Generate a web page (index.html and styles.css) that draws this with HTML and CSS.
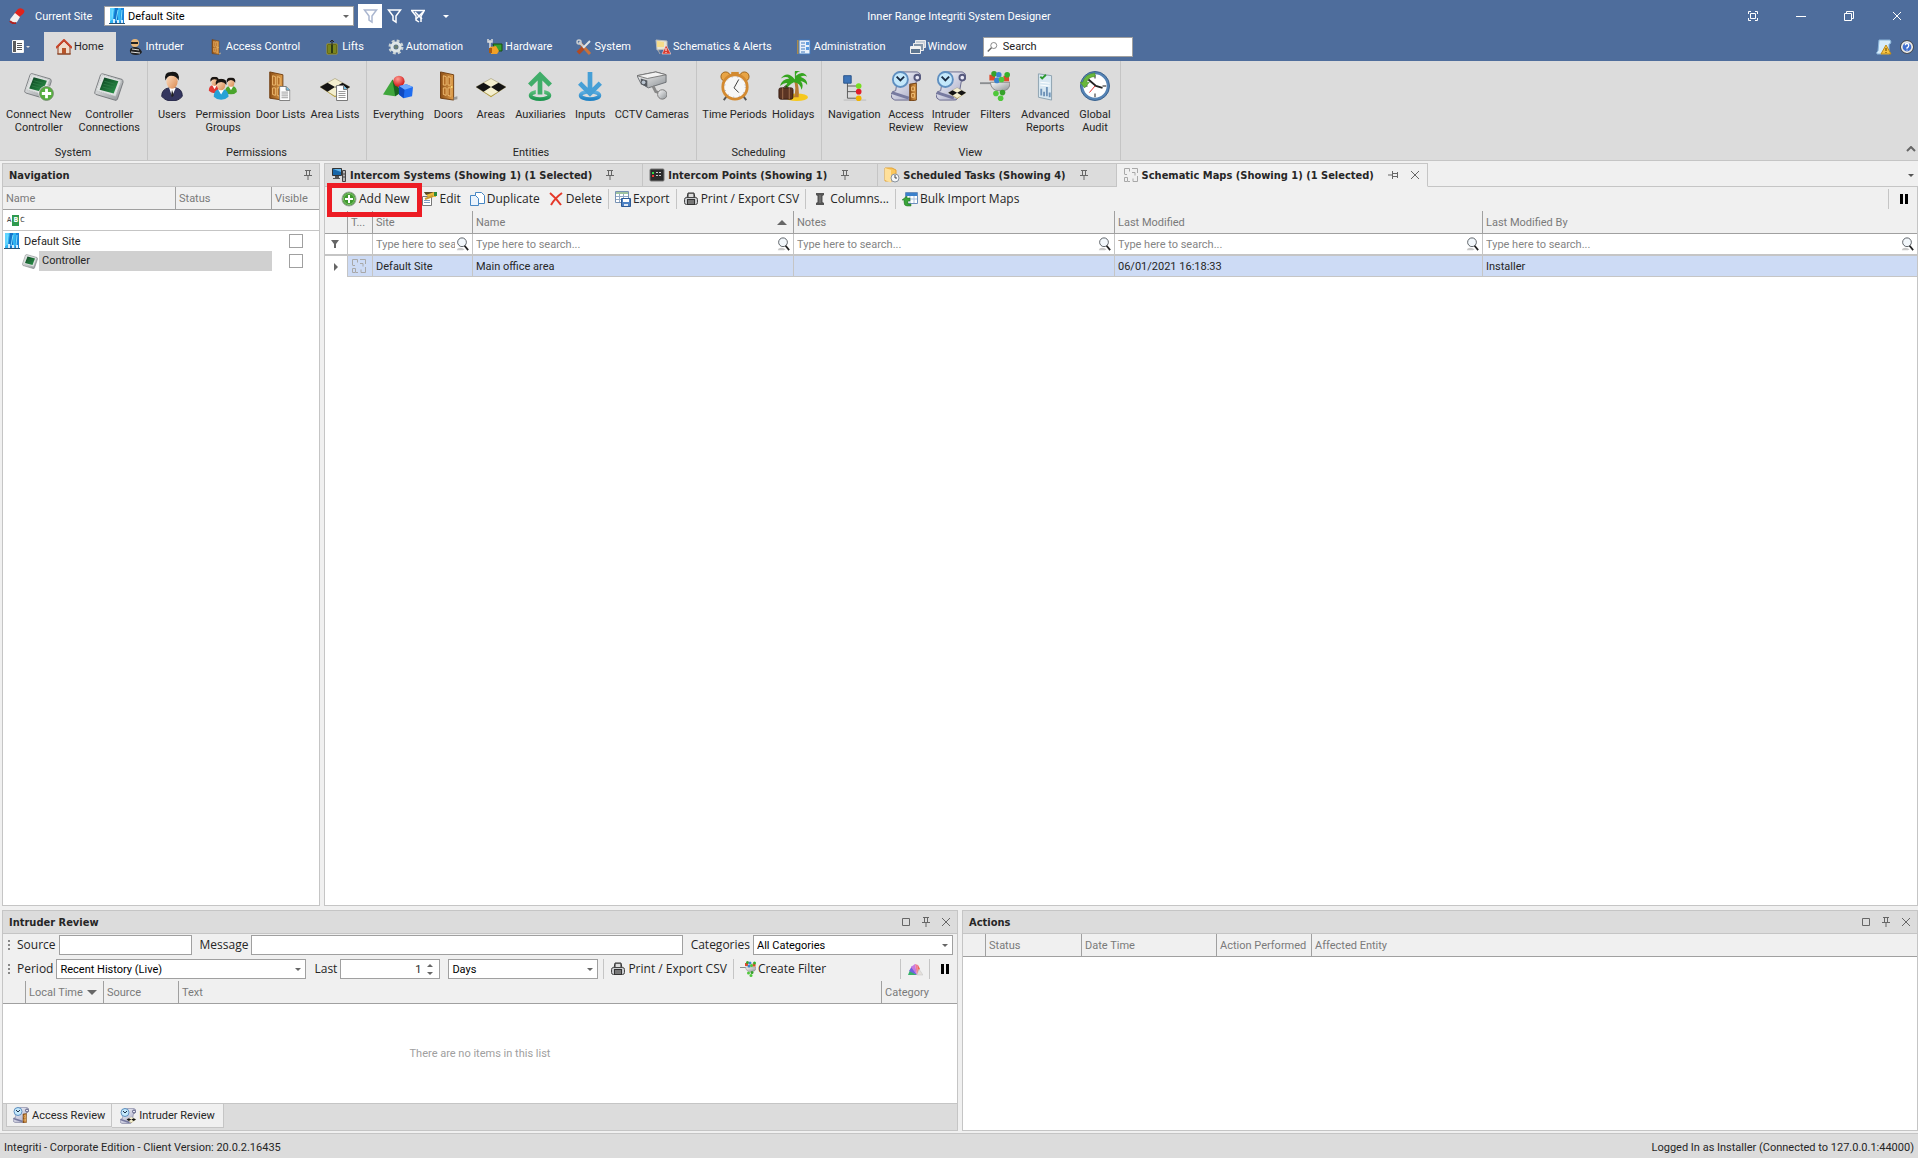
FILE: index.html
```html
<!DOCTYPE html>
<html lang="en">
<head>
<meta charset="utf-8">
<title>Inner Range Integriti System Designer</title>
<link rel="stylesheet" href="styles.css">
</head>
<body>
<svg class="sprite" aria-hidden="true">
  <defs>
    <linearGradient id="gSteel" x1="0" y1="0" x2="1" y2="1"><stop offset="0" stop-color="#fbfbfb"/><stop offset="1" stop-color="#8d9296"/></linearGradient>
    <linearGradient id="gChip" x1="0" y1="0" x2="1" y2="1"><stop offset="0" stop-color="#0b3d1e"/><stop offset="1" stop-color="#2c9a4c"/></linearGradient>
    <linearGradient id="gWood" x1="0" y1="0" x2="1" y2="0"><stop offset="0" stop-color="#8d4f16"/><stop offset="1" stop-color="#e2a04c"/></linearGradient>
    <linearGradient id="gSkin" x1="0" y1="0" x2="1" y2="1"><stop offset="0" stop-color="#ffe3c8"/><stop offset="1" stop-color="#d9884e"/></linearGradient>
    <linearGradient id="gGreen" x1="0" y1="0" x2="0" y2="1"><stop offset="0" stop-color="#56bd78"/><stop offset="1" stop-color="#1f9650"/></linearGradient>
    <linearGradient id="gBlue" x1="0" y1="0" x2="0" y2="1"><stop offset="0" stop-color="#5fb0e2"/><stop offset="1" stop-color="#2283c4"/></linearGradient>
    <linearGradient id="gScroll" x1="0" y1="0" x2="1" y2="1"><stop offset="0" stop-color="#ffffff"/><stop offset="1" stop-color="#9d9fc0"/></linearGradient>
    <radialGradient id="gRed" cx=".4" cy=".3" r=".7"><stop offset="0" stop-color="#ff9c92"/><stop offset="1" stop-color="#cf1414"/></radialGradient>
  </defs>

  <symbol id="page" viewBox="0 0 12 16"><path d="M.5.5h7l4 4v11H.5z" fill="#fff" stroke="#777"/><path d="M7.500.5v4h4" fill="#6ec6ee" stroke="#777"/><path d="M2.500 6.500h7M2.500 8.500h7M2.500 10.500h7M2.500 12.500h7" stroke="#999"/></symbol>

  <symbol id="controller" viewBox="0 0 32 32"><path d="M9 3 30 9 Q31 10 31 12L25 30 Q24 32 22 31L2 25 Q0 24 1 22L7 4Q8 3 9 3z" fill="url(#gSteel)" stroke="#74787b"/><path d="M9 4 29 10 23 27 2 21z" fill="#dfe2e2" stroke="#b9bcbc" stroke-dasharray="1 1"/><path d="M11 7 26 11 21 24 6 20z" fill="url(#gChip)"/><path d="M11 11l11 3M10 14l11 3M9 17l11 3" stroke="#2d7a45"/></symbol>
  <symbol id="controller-add" viewBox="0 0 32 32"><use href="#controller" width="30" height="30"/><circle cx="24" cy="24" r="8" fill="#55ae3d" stroke="#fff" stroke-width="1"/><circle cx="24" cy="24" r="7.500" fill="none" stroke="#7e8c7c"/><path d="M24 19v10M19 24h10" stroke="#fff" stroke-width="3"/></symbol>
  <symbol id="user" viewBox="0 0 32 32"><path d="M5 27q0-8 8-9h7q7 1 7 9-4 5-11 5T5 27z" fill="#34365f" stroke="#1f2040"/><path d="M13 18l3 9 4-9z" fill="#fff"/><path d="M16 20l-1 6 1 2 2-2z" fill="#222"/><ellipse cx="16" cy="11" rx="6" ry="8" fill="url(#gSkin)"/><path d="M9 10Q7 1 15 1q10-1 8 9-2-5-8-5-4 0-6 5z" fill="#151515"/></symbol>
  <symbol id="mini-user" viewBox="0 0 16 20"><path d="M1 17q0-6 5-7h4q5 1 5 7-3 3-7 3t-7-3z" fill="currentColor"/><path d="M5 10l3 5 3-5z" fill="#fff"/><ellipse cx="8" cy="6" rx="4" ry="5" fill="url(#gSkin)"/><path d="M3 6Q2 0 8 0q6 0 5 6-2-3-5-3T3 6z" fill="#1a1512"/></symbol>
  <symbol id="groups" viewBox="0 0 32 32"><use href="#mini-user" x="0" y="6" width="14" height="18" color="#e23b35"/><use href="#mini-user" x="17" y="7" width="15" height="18" color="#4aa52c"/><use href="#mini-user" x="5" y="8" width="18" height="23" color="#27a2d6"/></symbol>
  <symbol id="door" viewBox="0 0 32 32"><path d="M8 1 22 4v27L8 29z" fill="url(#gWood)" stroke="#6f3c0e"/><path d="M11 5l3 1v9h-3zM16 6l3 1v8h-3zM11 18h3v8l-3-1zM16 18h3v9l-3-1z" fill="#b26c26" stroke="#f0bd72"/><circle cx="20" cy="17" r="1" fill="#ffe07a"/><path d="M22 28l4-1v3l-4 1z" fill="#999"/></symbol>
  <symbol id="doorlist" viewBox="0 0 32 32"><use href="#door" x="-4" width="32" height="32"/><use href="#page" x="14" y="16" width="12" height="16"/></symbol>
  <symbol id="area" viewBox="0 0 32 32"><path d="M0 17l16 9 16-9-16 11z" fill="#c8a928"/><path d="M0 17 16 8l16 9-16 10z" fill="#f4efcf" stroke="#8b8050" stroke-width=".5"/><path d="M0 17l8-4.500 8 4.500-8 5zM16 17l8-4.500 8 4.500-8 5z" fill="#141414"/></symbol>
  <symbol id="arealist" viewBox="0 0 32 32"><use href="#area" width="32" height="32"/><use href="#page" x="17" y="15" width="13" height="17"/></symbol>
  <symbol id="shapes" viewBox="0 0 32 32"><path d="M0 25 10 9l10 13-7 5z" fill="#3fa63b"/><path d="M10 9l10 13-7 5z" fill="#17641f"/><circle cx="17" cy="11" r="6" fill="url(#gRed)"/><path d="M17 16l8-2 7 3-1 10-9 2-5-4z" fill="#1f6df0"/><path d="M17 16l6 4 9-3-7-3z" fill="#6da8ff"/><path d="M23 20l-1 9-5-4v-9z" fill="#114ac0"/></symbol>
  <symbol id="aux" viewBox="0 0 32 32"><ellipse cx="16" cy="26" rx="10" ry="4" fill="none" stroke="url(#gGreen)" stroke-width="4"/><path d="M16 26V5" stroke="#dcdcdc" stroke-width="9"/><path d="M16 25V4M5 15 16 4l11 11" fill="none" stroke="#40ad69" stroke-width="5"/></symbol>
  <symbol id="input" viewBox="0 0 32 32"><ellipse cx="16" cy="26" rx="10" ry="4" fill="none" stroke="url(#gBlue)" stroke-width="4"/><path d="M16 0v22" stroke="#dcdcdc" stroke-width="9"/><path d="M16 1v21M5 13l11 11 11-11" fill="none" stroke="#469fd6" stroke-width="5"/></symbol>
  <symbol id="cctv" viewBox="0 0 32 32"><path d="M0 5 20 1l11 3v8L12 18 4 13z" fill="url(#gSteel)" stroke="#6a6e72"/><path d="M0 5l11 3L31 4 20 1z" fill="#f2f2f2" stroke="#777"/><path d="M4 8l7 2v7l-7-3z" fill="#555a60"/><circle cx="7" cy="12" r="2" fill="#b9c4d0"/><path d="M17 16l3 6 6 2" stroke="#888" stroke-width="3" fill="none"/><circle cx="27" cy="25" r="5" fill="url(#gSteel)" stroke="#777"/></symbol>
  <symbol id="alarm" viewBox="0 0 32 32"><circle cx="6" cy="6" r="5" fill="#e8a445" stroke="#9d6217"/><circle cx="26" cy="6" r="5" fill="#e8a445" stroke="#9d6217"/><path d="M12 1h8v4h-8z" fill="#d08a30"/><path d="M7 27l-3 4M25 27l3 4" stroke="#555" stroke-width="2"/><circle cx="16" cy="17" r="13" fill="#f7f7f7" stroke="#d38a31" stroke-width="3"/><circle cx="16" cy="17" r="11" fill="none" stroke="#99a" stroke-width="1" stroke-dasharray="1 5"/><path d="M20 9l-5 9 5 5" fill="none" stroke="#333"/></symbol>
  <symbol id="palm" viewBox="0 0 32 32"><ellipse cx="20" cy="28" rx="12" ry="4" fill="#f6c81e"/><path d="M17 10q3 8 0 18h5q1-10-2-18z" fill="#b77a32"/><path d="M18 9Q10-1 3 8q6-3 9 0-8 1-10 8 5-4 8-3-4 4-2 8 3-6 9-9 7 1 8 8 3-6-1-9 4 0 7 4 1-6-7-9 4-2 7 0-4-7-12-1 0-4 5-5-7-3-6 3z" fill="#35a51f"/><rect x="1" y="18" width="15" height="12" rx="2" fill="#5b3423" stroke="#331b10"/><path d="M5 18v12M12 18v12" stroke="#a07050"/><path d="M6 18q2-4 5 0" fill="none" stroke="#331b10"/></symbol>
  <symbol id="tree" viewBox="0 0 32 32"><path d="M5 31h24" stroke="#bbb"/><path d="M9 8v21h10M9 16h10M9 22h10" fill="none" stroke="#555"/><path d="M5 5h8v8H5z" fill="#3d74b8" stroke="#27528a"/><circle cx="21" cy="16" r="3" fill="#77dd22"/><circle cx="21" cy="22" r="3" fill="#e11d2b"/><circle cx="21" cy="29" r="3" fill="#f0b400"/></symbol>
  <symbol id="scrollclock" viewBox="0 0 32 32"><path d="M8 1h20q4 1 4 6-1 4-5 4l-3 17q-2 4-6 3H4q-4-1-4-6 1-4 5-4z" fill="url(#gScroll)" stroke="#66688c"/><circle cx="28" cy="7" r="3" fill="#e8e8f6" stroke="#55587c" stroke-width="2"/><path d="M1 23l18 6" stroke="#777aa0" stroke-width="3"/><circle cx="10" cy="9" r="8" fill="#c4e8fb" stroke="#5f8fc0" stroke-width="2"/><path d="M6 6l4 4 4-4" fill="none" stroke="#1b2c44" stroke-width="2"/></symbol>
  <symbol id="accessreview" viewBox="0 0 32 32"><use href="#scrollclock" width="32" height="32"/><path d="M20 14l7-1v18l-7 1z" fill="url(#gWood)" stroke="#6f3c0e"/><path d="M22 17h3v4h-3zM22 24h3v4h-3z" fill="none" stroke="#f2c07a"/></symbol>
  <symbol id="intruderreview" viewBox="0 0 32 32"><use href="#scrollclock" width="32" height="32"/><use href="#area" x="13" y="13" width="19" height="19"/></symbol>
  <symbol id="sieve" viewBox="0 0 32 32"><path d="M0 12h14v2H0z" fill="#8a8d90"/><path d="M11 12h21q0 9-8 9h-4q-8 0-9-9z" fill="url(#gSteel)" stroke="#888"/><path d="M10 4h6v6h-6zM25 5h6v6h-6z" fill="#e04a2a"/><circle cx="15" cy="3" r="3" fill="#36a12a"/><circle cx="29" cy="4" r="3" fill="#36b12a"/><circle cx="20" cy="4" r="3" fill="#3a84cf"/><circle cx="18" cy="10" r="3" fill="#3a84cf"/><circle cx="23" cy="9" r="3" fill="#4fc83a"/><circle cx="17" cy="24" r="3" fill="#4fc83a"/><circle cx="24" cy="23" r="3" fill="#36a12a"/><circle cx="22" cy="29" r="3" fill="#4fc83a"/></symbol>
  <symbol id="report" viewBox="0 0 32 32"><path d="M9 3l14 2v26L9 28z" fill="#d8e8f2" stroke="#8ba0ae"/><path d="M11 6l2 2 4-4" fill="none" stroke="#2d9a2d" stroke-width="2"/><path d="M11 12l10 1M11 15l10 1" stroke="#fff"/><path d="M12 26v-7M15 27v-5M18 27V17M21 28v-5" stroke="#6f93b8" stroke-width="2"/></symbol>
  <symbol id="audit" viewBox="0 0 32 32"><circle cx="16" cy="16" r="14" fill="#fff" stroke="#5583b4" stroke-width="3"/><circle cx="16" cy="16" r="15.500" fill="none" stroke="#385f8c"/><path d="M16 4v4M16 24v4M4 16h4M24 16h4" stroke="#888" stroke-width="2"/><path d="M16 2Q5 3 3 12H0l5 6 5-6H7q2-6 9-6z" fill="#69b83c" stroke="#3d8420" stroke-width=".5"/><path d="M9 9l8 7 7 2" fill="none" stroke="#222" stroke-width="2"/><path d="M16 16l-6 7" stroke="#d22"/></symbol>

  <symbol id="applogo" viewBox="0 0 16 16"><path d="M9 1q3-2 6 1 1 2-1 4L9 10 5 6z" fill="#e0231b"/><path d="M6 5l5 4-3 5q-3 2-6 1-2-3 0-5z" fill="#f3f0ee"/><path d="M1 13q2 3 6 2" stroke="#a22" fill="none" stroke-width="2"/></symbol>
  <symbol id="site" viewBox="0 0 16 16"><path d="M1 0h14v15H1z" fill="#2fb4f2"/><path d="M1 0h4L2 13H1z" fill="#5fd4ff"/><path d="M6 0h3v15H4z" fill="#1576cc"/><path d="M12 0h3v15h-4z" fill="#1a85da"/><path d="M9 2L7 13M13 2l-1 11M4 2L3 12" stroke="#7fe0ff"/><path d="M4 11h2v4H4zM8 12h2v3H8zM12 12h2v3h-2z" fill="#d6efff"/><path d="M0 15h16v1H0z" fill="#2a5273"/></symbol>
  <symbol id="funnel" viewBox="0 0 16 16"><path d="M2.500 2h12L10 8v6l-3-2V8z" fill="none" stroke="currentColor" stroke-width="1.500"/></symbol>
  <symbol id="funnel-x" viewBox="0 0 16 16"><path d="M1 2.500h14M2 3l4 5v4l3 2M14 3l-3 5v6" fill="none" stroke="currentColor" stroke-width="1.500"/><path d="M5 4l7 7M13 4l-7 7" stroke="currentColor" stroke-width="1.500"/></symbol>
  <symbol id="menu" viewBox="0 0 20 16"><path d="M1.500 1.500h11v12h-11z" fill="#5c5c5c" stroke="#f5f5f5"/><path d="M5 2h7v11H5z" fill="#fff"/><path d="M6 4.500h5M6 6.500h5M6 8.500h5M6 10.500h5" stroke="#555"/><path d="M15 7h4l-2 2z" fill="#ddd"/></symbol>
  <symbol id="home" viewBox="0 0 16 16"><path d="M2 8v7h12V8L8 2z" fill="#f0dccb" stroke="#8d3a1c"/><path d="M0 9l8-8 8 8" fill="none" stroke="#c8452a" stroke-width="2"/><path d="M6 9h4v6H6z" fill="#b8552a"/><path d="M1 15h14" stroke="#8a4a2a"/></symbol>
  <symbol id="burglar" viewBox="0 0 16 16"><ellipse cx="7" cy="4" rx="4" ry="4" fill="#e8b77a"/><path d="M3 3h7v2H3z" fill="#222"/><path d="M2 13q-1-4 4-5 6 0 8 5-1 3-6 3-5 0-6-3z" fill="#222"/><path d="M4 10l7 1M3 13l9 1" stroke="#ddd"/></symbol>
  <symbol id="lift" viewBox="0 0 16 16"><path d="M3 5h10v10H3z" fill="#2c3a12" stroke="#a59a1f"/><path d="M4 6h3v8H4zM9 6h3v8H9z" fill="#7b861c"/><path d="M8 1v5M6 3l2-2 2 2" stroke="#222" fill="none"/></symbol>
  <symbol id="gear" viewBox="0 0 16 16"><circle cx="8" cy="8" r="6" fill="none" stroke="#c9d2d4" stroke-width="3" stroke-dasharray="2.700 2"/><circle cx="8" cy="8" r="4" fill="none" stroke="#dfe6e6" stroke-width="3"/><circle cx="8" cy="8" r="2" fill="#6b7f6e"/></symbol>
  <symbol id="hardware" viewBox="0 0 16 16"><path d="M3 1v8M1 0v3h4V0" stroke="#ddd" stroke-width="1.500" fill="none"/><path d="M6 5h9v7H8z" fill="#37a12c" stroke="#184f14"/><path d="M3 8l6-1 3 5-2 3H4z" fill="#f2a127"/><path d="M2 9h3v5H2z" fill="#a85b14"/></symbol>
  <symbol id="tools" viewBox="0 0 16 16"><path d="M4 4l10 11" stroke="#c9723c" stroke-width="3"/><path d="M3 3l5 5" stroke="#c9ced2" stroke-width="2"/><circle cx="3" cy="3" r="2" fill="none" stroke="#c9ced2" stroke-width="1.500"/><path d="M14 2L7 9" stroke="#dfe3e6" stroke-width="2"/><path d="M7 9l-5 5" stroke="#b04a24" stroke-width="4"/></symbol>
  <symbol id="schematic" viewBox="0 0 16 16"><path d="M1 1l11 1v8L2 11z" fill="#e9e6d2" stroke="#bbb"/><path d="M2 2l7 1v5H2z" fill="#f6dc8a"/><path d="M3 11l2 4" stroke="#aaa"/><path d="M11 6l5 9H7z" fill="#d8392d" stroke="#fff" stroke-width=".5"/><path d="M11 9v3M11 13v1" stroke="#fff"/></symbol>
  <symbol id="adminbook" viewBox="0 0 16 16"><path d="M1 1h3v14H1z" fill="#a98a4a"/><path d="M3 1h11v14H3z" fill="#e8f1fb" stroke="#3f78bd"/><path d="M5 4h4M5 7h4M5 10h4M5 13h4" stroke="#3f78bd"/><path d="M10 3h3v3h-3zM10 8h3v3h-3z" fill="#5a9be0"/></symbol>
  <symbol id="windows" viewBox="0 0 16 16"><path d="M5.500 1.500h10v7h-10z" fill="#c3ccd6" stroke="#eee"/><path d="M3.500 4.500h10v7h-10z" fill="#8597aa" stroke="#eee"/><path d="M.5 7.500h10v7H.5z" fill="#5e7690" stroke="#f2f2f2"/><path d="M1 9h9" stroke="#f2f2f2" stroke-width="2"/></symbol>
  <symbol id="find" viewBox="0 0 16 16"><circle cx="9" cy="6" r="4" fill="none" stroke="#666"/><path d="M6 9l-5 5" stroke="#666" stroke-width="2"/></symbol>
  <symbol id="lens" viewBox="0 0 16 16"><path d="M3 13q4-2 8 1l-2 1H2z" fill="#c7c7c7"/><circle cx="8" cy="6" r="5" fill="#f2f7fb" stroke="#4b5157"/><path d="M11 10l4 5" stroke="#222" stroke-width="2"/></symbol>
  <symbol id="scrollwarn" viewBox="0 0 16 16"><path d="M3 1h11q2 2 0 4h-1v10H1q-1-2 1-3z" fill="#d6ecfb" stroke="#8ab4d8"/><path d="M10 6l5 9H5z" fill="#f6c343" stroke="#c08a15"/><path d="M10 9v3M10 13v1" stroke="#5a3c00"/></symbol>
  <symbol id="help" viewBox="0 0 16 16"><circle cx="8" cy="8" r="6" fill="#3f6fcf" stroke="#ece9e2" stroke-width="2"/><circle cx="8" cy="8" r="7.500" fill="none" stroke="#4a4a4a"/><path d="M6 6q0-2 2-2t2 2-2 3v1M8 11v1" stroke="#fff" stroke-width="1.500" fill="none"/></symbol>
  <symbol id="pin" viewBox="0 0 10 12"><path d="M2 1.500h6M3.500 1v5M6.500 1v5M1 6.500h8M5 7v4" stroke="currentColor" fill="none"/><path d="M6 2h1v4H6z" fill="currentColor"/></symbol>
  <symbol id="pin-side" viewBox="0 0 12 10"><path d="M10.500 2v6M11 3.500H6M11 6.500H6M5.500 1v8M5 5H1" stroke="currentColor" fill="none"/><path d="M6 6h5v1H6z" fill="currentColor"/></symbol>
  <symbol id="close" viewBox="0 0 10 10"><path d="M1 1l8 8M9 1L1 9" stroke="currentColor"/></symbol>
  <symbol id="maximize" viewBox="0 0 10 10"><path d="M1.500 1.500h7v7h-7z" fill="none" stroke="currentColor"/></symbol>
  <symbol id="minimize" viewBox="0 0 10 10"><path d="M0 5.500h10" stroke="currentColor"/></symbol>
  <symbol id="restore" viewBox="0 0 10 10"><path d="M.5 2.500h7v7h-7zM2.500 2V.5h7v7H8" fill="none" stroke="currentColor"/></symbol>
  <symbol id="fullscreen" viewBox="0 0 10 10"><path d="M.5 3V.5H3M7 .5h2.500V3M9.500 7v2.500H7M3 9.500H.5V7M2.500 2.500h5v5h-5z" fill="none" stroke="currentColor"/></symbol>
  <symbol id="chevron-up" viewBox="0 0 10 6"><path d="M1 5l4-4 4 4" fill="none" stroke="#666" stroke-width="2"/></symbol>
  <symbol id="intercom" viewBox="0 0 16 16"><path d="M1.500 1.500h9v7h-9z" fill="#1766a8" stroke="#333"/><path d="M2 2h8v3z" fill="#63b4e8"/><path d="M4 9h4v2h1v1H2v-1h2z" fill="#555"/><path d="M11.500 3.500h3v11h-3z" fill="#b5b5b5" stroke="#444"/><path d="M12 7h2M12 10h2" stroke="#444"/></symbol>
  <symbol id="intercompt" viewBox="0 0 16 16"><rect x="1" y="2" width="14" height="12" rx="1" fill="#2b2b2b" stroke="#777"/><path d="M3 5h2v2H3z" fill="#35d447"/><path d="M3 8h2v2H3z" fill="#e33"/><path d="M7 5.500h6M7 8.500h6" stroke="#ccc" stroke-dasharray="2 1"/></symbol>
  <symbol id="folderclock" viewBox="0 0 16 16"><path d="M1 1h7l4 2v11H1z" fill="#fbc75c" stroke="#e3a436"/><path d="M1 1l6 2v13l-6-3z" fill="#ffe09a"/><circle cx="11" cy="11" r="4" fill="#f4f6f8" stroke="#8a94a0"/><path d="M11 8v3h2" fill="none" stroke="#444"/></symbol>
  <symbol id="map" viewBox="0 0 16 16"><path d="M1.500 7V1.500h5v3M4 7.500H1.500M9 1.500h5.500V6M9 5.500h3v3M14.500 9v5.500H10v-3M1.500 10.500h3v4h-3zM7 14.500H5" fill="none" stroke="#a8a8a8"/></symbol>
  <symbol id="plus" viewBox="0 0 16 16"><circle cx="8" cy="8" r="7" fill="#3f9a2f" stroke="#9aa39a"/><circle cx="8" cy="8" r="5.500" fill="none" stroke="#84c46f"/><path d="M8 4v8M4 8h8" stroke="#fff" stroke-width="2"/></symbol>
  <symbol id="edit" viewBox="0 0 16 16"><path d="M1.500 5.500h9v9h-9z" fill="#fff" stroke="#777"/><path d="M3 9.500h6M3 11.500h6" stroke="#7d9cc0"/><path d="M3 1h12v5H7z" fill="#e8b83a"/><path d="M3 1h10l-8 3z" fill="#5a4a28"/><path d="M13 1h3v4h-3z" fill="#2e8a3a"/><path d="M4 8l8-3" stroke="#c89c34" stroke-width="2"/></symbol>
  <symbol id="duplicate" viewBox="0 0 16 16"><path d="M6.500 1.500h6l3 3v8h-9z" fill="#fff" stroke="#4787c4"/><path d="M1.500 4.500h5l3 3v7h-8z" fill="#eaf3fc" stroke="#4787c4"/></symbol>
  <symbol id="delete" viewBox="0 0 16 16"><path d="M2 2q6 5 11 12M14 2Q7 7 3 14" stroke="#e5392a" stroke-width="2" fill="none"/></symbol>
  <symbol id="export" viewBox="0 0 16 16"><path d="M.5.5h13v11H.5z" fill="#fff" stroke="#7792b4"/><path d="M1 1h12v2H1z" fill="#9fc3a0"/><path d="M1 5.500h12M1 8.500h12M4.500 3v8M8.500 3v8" stroke="#93aac6"/><path d="M6.500 7.500h9v8h-9z" fill="#4d82c4" stroke="#2d5a96"/><path d="M8 8h6v3H8z" fill="#fff"/><path d="M9 13h4v2H9z" fill="#e2eaf4"/></symbol>
  <symbol id="printer" viewBox="0 0 16 16"><path d="M5 2h6l1 5H4z" fill="#888" stroke="#333"/><path d="M6 3h4v3H6z" fill="#ddd"/><rect x="1.500" y="6.500" width="13" height="7" rx="2" fill="#c9cbce" stroke="#444"/><path d="M4 8h8v6H4z" fill="#333"/><path d="M5 10h6M5 12h6" stroke="#bbb"/></symbol>
  <symbol id="colicon" viewBox="0 0 16 16"><path d="M4 2h8v2l-1.500 1v6l1.500 1v2H4v-2l1.500-1V5L4 4z" fill="#555"/><path d="M8 4v8" stroke="#888"/></symbol>
  <symbol id="bulk" viewBox="0 0 16 16"><path d="M3.500 1.500h12v11h-12z" fill="#fff" stroke="#6b8fbd"/><path d="M4 2h11v3H4z" fill="#3a80cc"/><path d="M4 8h11M8 5v7M12 5v7" stroke="#a9bfdb"/><path d="M0 9l5-4v2h3v3H6v3h3v2H5q-3 0-3-4v-2z" fill="#3aa43a" stroke="#1c7020" stroke-width=".5"/></symbol>
  <symbol id="pause" viewBox="0 0 16 16"><path d="M4 3h3v10H4zM9 3h3v10H9z" fill="#000"/></symbol>
  <symbol id="funnel-solid" viewBox="0 0 10 10"><path d="M1 1h8L6 5v4H4V5z" fill="#666"/></symbol>
  <symbol id="palette" viewBox="0 0 16 16"><path d="M1 14 3 9l7 5z" fill="#37b26a"/><path d="M2 10 5 5l5 9z" fill="#6f62e0"/><path d="M4 6 8 3l2 11z" fill="#c77ae0"/><path d="M8 3l3 1-1 10z" fill="#f07a9a"/><path d="M11 4l2 4-3 6z" fill="#ef6a55"/><path d="M12 8l4 6h-6z" fill="#e4e0dc" stroke="#c4c4c4" stroke-width=".5"/></symbol>
</svg>

<header class="titlebar">
  <div class="quick">
    <svg class="i16"><use href="#applogo"/></svg>
    <label for="site-select" class="quick-label">Current Site</label>
    <span class="combo combo-site"><svg class="i16"><use href="#site"/></svg><select id="site-select"><option>Default Site</option></select></span>
    <button class="qbtn qbtn-on" aria-label="Filter"><svg class="i16"><use href="#funnel"/></svg></button>
    <button class="qbtn" aria-label="Edit filter"><svg class="i16"><use href="#funnel"/></svg></button>
    <button class="qbtn" aria-label="Clear filter"><svg class="i16"><use href="#funnel-x"/></svg></button>
    <button class="qbtn qbtn-drop" aria-label="Customise"></button>
  </div>
  <h1 class="apptitle">Inner Range Integriti System Designer</h1>
  <div class="winbtns">
    <button aria-label="Full screen"><svg class="i10"><use href="#fullscreen"/></svg></button>
    <button aria-label="Minimise"><svg class="i10"><use href="#minimize"/></svg></button>
    <button aria-label="Restore"><svg class="i10"><use href="#restore"/></svg></button>
    <button aria-label="Close"><svg class="i10"><use href="#close"/></svg></button>
  </div>
</header>

<nav class="menubar">
  <button class="filemenu" aria-label="Menu"><svg><use href="#menu"/></svg></button>
  <a href="#home-tab" class="mtab mtab-on"><svg class="i16"><use href="#home"/></svg>Home</a>
  <a href="#intruder-tab" class="mtab"><svg class="i16"><use href="#burglar"/></svg>Intruder</a>
  <a href="#access-tab" class="mtab"><svg class="i16"><use href="#door"/></svg>Access Control</a>
  <a href="#lifts-tab" class="mtab"><svg class="i16"><use href="#lift"/></svg>Lifts</a>
  <a href="#automation-tab" class="mtab"><svg class="i16"><use href="#gear"/></svg>Automation</a>
  <a href="#hardware-tab" class="mtab"><svg class="i16"><use href="#hardware"/></svg>Hardware</a>
  <a href="#system-tab" class="mtab"><svg class="i16"><use href="#tools"/></svg>System</a>
  <a href="#schematics-tab" class="mtab"><svg class="i16"><use href="#schematic"/></svg>Schematics &amp; Alerts</a>
  <a href="#administration-tab" class="mtab"><svg class="i16"><use href="#adminbook"/></svg>Administration</a>
  <a href="#window-tab" class="mtab"><svg class="i16"><use href="#windows"/></svg>Window</a>
  <label class="searchbox"><svg class="i12"><use href="#find"/></svg><input type="text" value="Search" aria-label="Search"></label>
  <div class="menu-right">
    <button aria-label="Warnings"><svg class="i16"><use href="#scrollwarn"/></svg></button>
    <button aria-label="Help"><svg class="i14"><use href="#help"/></svg></button>
  </div>
</nav>

<div class="ribbon">
  <section class="rgroup rg-system">
    <div class="tiles">
      <button class="tile"><svg><use href="#controller-add"/></svg>Connect New<br>Controller</button>
      <button class="tile"><svg><use href="#controller"/></svg>Controller<br>Connections</button>
    </div>
    <h2>System</h2>
  </section>
  <section class="rgroup rg-permissions">
    <div class="tiles">
      <button class="tile"><svg><use href="#user"/></svg>Users</button>
      <button class="tile"><svg><use href="#groups"/></svg>Permission<br>Groups</button>
      <button class="tile"><svg><use href="#doorlist"/></svg>Door Lists</button>
      <button class="tile"><svg><use href="#arealist"/></svg>Area Lists</button>
    </div>
    <h2>Permissions</h2>
  </section>
  <section class="rgroup rg-entities">
    <div class="tiles">
      <button class="tile"><svg><use href="#shapes"/></svg>Everything</button>
      <button class="tile"><svg><use href="#door"/></svg>Doors</button>
      <button class="tile"><svg><use href="#area"/></svg>Areas</button>
      <button class="tile"><svg><use href="#aux"/></svg>Auxiliaries</button>
      <button class="tile"><svg><use href="#input"/></svg>Inputs</button>
      <button class="tile"><svg><use href="#cctv"/></svg>CCTV Cameras</button>
    </div>
    <h2>Entities</h2>
  </section>
  <section class="rgroup rg-scheduling">
    <div class="tiles">
      <button class="tile"><svg><use href="#alarm"/></svg>Time Periods</button>
      <button class="tile"><svg><use href="#palm"/></svg>Holidays</button>
    </div>
    <h2>Scheduling</h2>
  </section>
  <section class="rgroup rg-view">
    <div class="tiles">
      <button class="tile"><svg><use href="#tree"/></svg>Navigation</button>
      <button class="tile"><svg><use href="#accessreview"/></svg>Access<br>Review</button>
      <button class="tile"><svg><use href="#intruderreview"/></svg>Intruder<br>Review</button>
      <button class="tile"><svg><use href="#sieve"/></svg>Filters</button>
      <button class="tile"><svg><use href="#report"/></svg>Advanced<br>Reports</button>
      <button class="tile"><svg><use href="#audit"/></svg>Global<br>Audit</button>
    </div>
    <h2>View</h2>
  </section>
  <button class="collapse" aria-label="Collapse ribbon"><svg><use href="#chevron-up"/></svg></button>
</div>

<main class="workspace">
  <div class="upper">
    <aside class="panel navpanel">
      <div class="ptitle"><h2>Navigation</h2><button aria-label="Pin"><svg class="pin"><use href="#pin"/></svg></button></div>
      <table class="grid navgrid">
        <colgroup><col class="c-navname"><col class="c-navstatus"><col></colgroup>
        <thead><tr><th>Name</th><th>Status</th><th>Visible</th></tr></thead>
        <tbody>
          <tr class="abcrow"><td colspan="3"><span class="abc"><span>A</span><b>B</b><span>C</span></span></td></tr>
          <tr><td colspan="2"><span class="node"><svg class="i16"><use href="#site"/></svg>Default Site</span></td><td class="check"><input type="checkbox" aria-label="Default Site visible"></td></tr>
          <tr><td colspan="2"><span class="node node-child"><svg class="i16"><use href="#controller"/></svg><span class="node-sel">Controller</span></span></td><td class="check"><input type="checkbox" aria-label="Controller visible"></td></tr>
        </tbody>
      </table>
    </aside>

    <section class="docs">
      <div class="doctabs">
        <button class="dtab"><svg class="i16"><use href="#intercom"/></svg>Intercom Systems (Showing 1) (1 Selected)<svg class="pin"><use href="#pin"/></svg></button>
        <button class="dtab"><svg class="i16"><use href="#intercompt"/></svg>Intercom Points (Showing 1)<svg class="pin"><use href="#pin"/></svg></button>
        <button class="dtab"><svg class="i16"><use href="#folderclock"/></svg>Scheduled Tasks (Showing 4)<svg class="pin"><use href="#pin"/></svg></button>
        <button class="dtab dtab-on"><svg class="i16"><use href="#map"/></svg>Schematic Maps (Showing 1) (1 Selected)<svg class="pin-side"><use href="#pin-side"/></svg><svg class="i10"><use href="#close"/></svg></button>
        <button class="tabdrop" aria-label="All tabs"></button>
      </div>
      <div class="docbody">
        <div class="toolbar">
          <button class="tb tb-add"><svg class="i16"><use href="#plus"/></svg>Add New</button>
          <button class="tb"><svg class="i16"><use href="#edit"/></svg>Edit</button>
          <button class="tb"><svg class="i16"><use href="#duplicate"/></svg>Duplicate</button>
          <button class="tb"><svg class="i16"><use href="#delete"/></svg>Delete</button>
          <span class="sep"></span>
          <button class="tb"><svg class="i16"><use href="#export"/></svg>Export</button>
          <span class="sep"></span>
          <button class="tb"><svg class="i16"><use href="#printer"/></svg>Print / Export CSV</button>
          <span class="sep"></span>
          <button class="tb"><svg class="i16"><use href="#colicon"/></svg>Columns...</button>
          <span class="sep"></span>
          <button class="tb"><svg class="i16"><use href="#bulk"/></svg>Bulk Import Maps</button>
          <span class="spacer"></span>
          <span class="sep"></span>
          <button class="tb tb-pause" aria-label="Pause"><svg class="i16"><use href="#pause"/></svg></button>
          <span class="callout"></span>
        </div>
        <table class="grid mapgrid">
          <colgroup><col class="c-ind"><col class="c-type"><col class="c-site"><col class="c-name"><col class="c-name"><col class="c-mod"><col></colgroup>
          <thead><tr><th></th><th>T...</th><th>Site</th><th><span class="sorted">Name<i class="sortup"></i></span></th><th>Notes</th><th>Last Modified</th><th>Last Modified By</th></tr></thead>
          <tbody>
            <tr class="filterrow">
              <td class="ind"><svg class="i10"><use href="#funnel-solid"/></svg></td><td></td>
              <td><label class="find"><input type="text" placeholder="Type here to search..." aria-label="Search site"><svg class="i14"><use href="#lens"/></svg></label></td>
              <td><label class="find"><input type="text" placeholder="Type here to search..." aria-label="Search name"><svg class="i14"><use href="#lens"/></svg></label></td>
              <td><label class="find"><input type="text" placeholder="Type here to search..." aria-label="Search notes"><svg class="i14"><use href="#lens"/></svg></label></td>
              <td><label class="find"><input type="text" placeholder="Type here to search..." aria-label="Search last modified"><svg class="i14"><use href="#lens"/></svg></label></td>
              <td><label class="find"><input type="text" placeholder="Type here to search..." aria-label="Search last modified by"><svg class="i14"><use href="#lens"/></svg></label></td>
            </tr>
            <tr class="selrow"><td class="ind"><i class="expander"></i></td><td class="ind"><svg class="i16"><use href="#map"/></svg></td><td>Default Site</td><td>Main office area</td><td></td><td>06/01/2021 16:18:33</td><td>Installer</td></tr>
          </tbody>
        </table>
      </div>
    </section>
  </div>

  <div class="lower">
    <section class="panel">
      <div class="ptitle"><h2>Intruder Review</h2><button aria-label="Maximise"><svg class="i10"><use href="#maximize"/></svg></button><button aria-label="Pin"><svg class="pin"><use href="#pin"/></svg></button><button aria-label="Close"><svg class="i10"><use href="#close"/></svg></button></div>
      <div class="filters">
        <div class="frow">
          <i class="grip"></i><label for="src">Source</label><input id="src" class="w-source" type="text">
          <label for="msg">Message</label><input id="msg" class="w-message" type="text">
          <label for="cat">Categories</label><span class="combo w-cat"><select id="cat"><option>All Categories</option></select></span>
        </div>
        <div class="frow">
          <i class="grip"></i><label for="per">Period</label><span class="combo w-period"><select id="per"><option>Recent History (Live)</option></select></span>
          <label for="last">Last</label><span class="spin"><input id="last" type="text" value="1"><span class="arrows"></span></span>
          <span class="combo w-days"><select aria-label="Unit"><option>Days</option></select></span>
          <div class="ftools">
            <span class="sep"></span>
            <button class="tb"><svg class="i16"><use href="#printer"/></svg>Print / Export CSV</button>
            <span class="sep"></span>
            <button class="tb"><svg class="i16"><use href="#sieve"/></svg>Create Filter</button>
            <span class="spacer"></span>
            <span class="sep"></span>
            <button class="tb" aria-label="Colours"><svg class="i16"><use href="#palette"/></svg></button>
            <span class="sep"></span>
            <button class="tb tb-pause" aria-label="Pause"><svg class="i16"><use href="#pause"/></svg></button>
          </div>
        </div>
      </div>
      <table class="grid revgrid">
        <colgroup><col class="c-rind"><col class="c-time"><col class="c-source"><col><col class="c-cat"></colgroup>
        <thead><tr><th></th><th><span class="sorted">Local Time<i class="sortdown"></i></span></th><th>Source</th><th>Text</th><th>Category</th></tr></thead>
      </table>
      <p class="empty">There are no items in this list</p>
      <div class="btabs">
        <button class="btab"><svg class="i16"><use href="#accessreview"/></svg>Access Review</button>
        <button class="btab btab-on"><svg class="i16"><use href="#intruderreview"/></svg>Intruder Review</button>
      </div>
    </section>
    <section class="panel">
      <div class="ptitle"><h2>Actions</h2><button aria-label="Maximise"><svg class="i10"><use href="#maximize"/></svg></button><button aria-label="Pin"><svg class="pin"><use href="#pin"/></svg></button><button aria-label="Close"><svg class="i10"><use href="#close"/></svg></button></div>
      <table class="grid">
        <colgroup><col class="c-rind"><col class="c-astatus"><col class="c-date"><col class="c-action"><col></colgroup>
        <thead><tr><th></th><th>Status</th><th>Date Time</th><th>Action Performed</th><th>Affected Entity</th></tr></thead>
      </table>
    </section>
  </div>
</main>

<footer class="statusbar"><span>Integriti - Corporate Edition - Client Version: 20.0.2.16435</span><span>Logged In as Installer (Connected to 127.0.0.1:44000)</span></footer>
</body>
</html>
```

FILE: styles.css
```css
:root {
  --blue: #4e6d9c;
  --bar: #dcdcdc;
  --face: #f0f0f0;
  --line: #c5c5c5;
  --edge: #a0a0a0;
  --text: #262626;
  --muted: #7a7a7a;
  --ui: Roboto, "Liberation Sans", sans-serif;
  --tool: "Open Sans", "Noto Sans", sans-serif;
  --bold: "DejaVu Sans Condensed", "DejaVu Sans", sans-serif;
}

* { box-sizing: border-box; }

body {
  margin: 0;
  min-height: 100vh;
  display: flex;
  flex-direction: column;
  background: var(--face);
  color: var(--text);
  font: 11px/13px var(--ui);
}

button, input, select {
  font: inherit;
  color: inherit;
  margin: 0;
  padding: 0;
  border: 0;
  background: none;
  border-radius: 0;
  outline: 0;
}

select { appearance: none; }
a { color: inherit; text-decoration: none; }
h1, h2, p { margin: 0; font-size: 11px; font-weight: normal; }
svg { display: block; flex: none; }

.sprite { position: absolute; width: 0; height: 0; }
.i10 { width: 10px; height: 10px; }
.i12 { width: 12px; height: 12px; }
.i14 { width: 14px; height: 14px; }
.i16 { width: 16px; height: 16px; }
.pin { width: 10px; height: 12px; }
.pin-side { width: 12px; height: 10px; }
.spacer { flex: 1; }

/* Title bar */
.titlebar {
  display: grid;
  grid-template-columns: 1fr auto 1fr;
  align-items: center;
  height: 32px;
  background: var(--blue);
  color: #fff;
}

.quick { display: flex; align-items: center; padding-left: 9px; }
.quick-label { width: 79px; padding-left: 10px; }

.combo {
  display: flex;
  align-items: center;
  position: relative;
  height: 20px;
  border: 1px solid var(--edge);
  background: #fff;
  color: #000;
}

.combo select { flex: 1; min-width: 0; padding: 0 16px 0 3px; }

.combo::after {
  content: "";
  position: absolute;
  right: 4px;
  top: 8px;
  border: 3px solid transparent;
  border-top-color: #666;
  border-bottom: 0;
}

.combo-site { width: 250px; padding-left: 4px; }

.qbtn { width: 24px; height: 24px; display: grid; place-items: center; color: #fff; }
.qbtn-on { background: #fff; color: #aab6cf; margin-left: 4px; }

.qbtn-drop::after {
  content: "";
  margin-left: 8px;
  border: 3px solid transparent;
  border-top-color: #fff;
  border-bottom: 0;
}

.winbtns { display: flex; justify-content: flex-end; gap: 6px; }
.winbtns button { width: 42px; height: 32px; display: grid; place-items: center; }

/* Ribbon tabs */
.menubar {
  display: flex;
  align-items: center;
  height: 29px;
  background: var(--blue);
  color: #fff;
}

.filemenu { width: 44px; padding-left: 11px; }
.filemenu svg { width: 20px; height: 16px; }

.mtab {
  display: flex;
  align-items: center;
  gap: 2px;
  height: 29px;
  padding: 0 12px;
  white-space: nowrap;
}

.mtab-on { background: var(--bar); color: var(--text); }

.searchbox {
  display: flex;
  align-items: center;
  gap: 4px;
  width: 150px;
  height: 20px;
  margin-left: 4px;
  padding-left: 3px;
  border: 1px solid var(--edge);
  background: #fff;
  color: #222;
}

.searchbox input { flex: 1; min-width: 0; }
.menu-right { display: flex; align-items: center; gap: 8px; margin-left: auto; padding-right: 4px; }

/* Ribbon */
.ribbon { display: flex; height: 100px; background: var(--bar); border-bottom: 1px solid var(--line); }

.rgroup {
  display: flex;
  flex-direction: column;
  justify-content: space-between;
  padding: 10px 4px 1px 3px;
  border-right: 1px solid var(--line);
}

.rgroup h2 { text-align: center; line-height: 13px; }
.rg-system { width: 148px; }
.rg-permissions { width: 219px; }
.rg-entities { width: 330px; }
.rg-scheduling { width: 125px; }
.rg-view { width: 299px; }

.tiles { display: flex; justify-content: space-between; }

.tile {
  display: flex;
  flex-direction: column;
  align-items: center;
  min-width: 42px;
  padding: 0 3px;
  white-space: nowrap;
  text-align: center;
  line-height: 13px;
}

.tile svg { width: 30px; height: 30px; margin-bottom: 7px; }
.collapse { align-self: flex-end; margin: 0 2px 8px auto; }
.collapse svg { width: 10px; height: 6px; }

/* Workspace */
.workspace { flex: 1; display: flex; flex-direction: column; gap: 4px; padding: 2px 0 2px 2px; }
.upper { flex: 1; display: flex; gap: 4px; }
.lower { display: grid; grid-template-columns: 1fr 1fr; gap: 4px; height: 221px; }

.panel { display: flex; flex-direction: column; min-width: 0; border: 1px solid var(--line); background: #fff; }
.navpanel { width: 318px; }

.ptitle {
  display: flex;
  align-items: center;
  gap: 10px;
  height: 23px;
  padding: 0 6px;
  border-bottom: 1px solid var(--line);
  background: var(--bar);
  color: #666;
}

.ptitle h2 { flex: 1; color: var(--text); font: bold 11px/13px var(--bold); }

/* Data grids */
.grid { width: 100%; table-layout: fixed; border-collapse: separate; border-spacing: 0; }

.grid th {
  height: 23px;
  padding: 0 0 0 3px;
  border-right: 1px solid var(--edge);
  border-bottom: 1px solid var(--edge);
  background: var(--face);
  color: var(--muted);
  font-weight: normal;
  text-align: left;
  white-space: nowrap;
}

.grid th:last-child, .grid td:last-child { border-right: 0; }
.grid td { height: 20px; padding: 0; overflow: hidden; white-space: nowrap; }

.c-navname { width: 173px; }
.c-navstatus { width: 96px; }
.c-ind { width: 23px; }
.c-type { width: 25px; }
.c-site { width: 100px; }
.c-name { width: 321px; }
.c-mod { width: 368px; }
.c-rind { width: 23px; }
.c-time { width: 78px; }
.c-source { width: 75px; }
.c-cat { width: 75px; }
.c-astatus { width: 96px; }
.c-date { width: 135px; }
.c-action { width: 95px; }

.grid .abcrow td { height: 21px; border-bottom: 1px solid var(--line); }
.abc { display: flex; align-items: center; padding-left: 4px; font: 7px/11px var(--bold); gap: 1px; }
.abc b { width: 7px; background: #2f9a4e; color: #fff; text-align: center; }
.node { display: flex; align-items: center; gap: 4px; height: 20px; padding-left: 1px; }
.node-child { padding-left: 19px; gap: 1px; }
.node-sel { flex: 1; background: #d0d0d0; line-height: 20px; padding-left: 3px; }
.grid .check { padding-left: 17px; }

.check input {
  appearance: none;
  display: block;
  width: 14px;
  height: 14px;
  border: 1px solid var(--edge);
  background: #fff;
}

.sorted { display: flex; align-items: center; justify-content: space-between; padding-right: 6px; }
.sortup { border: 5px solid transparent; border-bottom-color: #666; border-top: 0; }
.sortdown { border: 5px solid transparent; border-top-color: #666; border-bottom: 0; }

/* Document area */
.docs { flex: 1; min-width: 0; display: flex; flex-direction: column; }
.doctabs { display: flex; height: 24px; box-shadow: inset 0 -1px var(--line); }

.dtab {
  display: flex;
  align-items: center;
  gap: 3px;
  padding: 0 27px 0 6px;
  border: 1px solid var(--line);
  border-left-width: 0;
  background: var(--bar);
  font: bold 11px/13px var(--bold);
  white-space: nowrap;
}

.dtab:first-child { border-left-width: 1px; }
.dtab .pin, .dtab .pin-side { margin-left: 10px; color: #666; }
.dtab .i10 { margin-left: 8px; color: #666; }
.dtab-on { background: var(--face); border-bottom-color: var(--face); padding-right: 7px; }
.tabdrop { margin-left: auto; padding-right: 4px; }

.tabdrop::after {
  content: "";
  display: block;
  border: 3px solid transparent;
  border-top-color: #555;
  border-bottom: 0;
}

.docbody { flex: 1; border: 1px solid var(--line); border-top: 0; background: #fff; }

.toolbar {
  position: relative;
  display: flex;
  align-items: center;
  height: 24px;
  padding-left: 12px;
  background: var(--face);
}

.tb { display: flex; align-items: center; gap: 2px; padding: 0 4px; font: 12px/16px var(--tool); white-space: nowrap; }
.tb-add { padding-right: 8px; }
.sep { width: 1px; height: 20px; margin: 0 2px; background: var(--line); }
.tb-pause { padding: 0 0 0 5px; }
.toolbar .tb-pause { padding-right: 5px; }

.callout {
  position: absolute;
  left: 2px;
  top: -4px;
  width: 95px;
  height: 34px;
  border: 5px solid #ed1c24;
}

.mapgrid td { border-right: 1px solid var(--line); padding-left: 3px; }
.mapgrid .filterrow td { height: 22px; border-bottom: 2px solid var(--line); }
.mapgrid .selrow td { height: 21px; border-bottom: 1px solid var(--line); background: #cddbf5; }
.mapgrid .selrow td:first-child { background: #fff; border-bottom: 0; }
.mapgrid .ind .i10 { margin-left: 2px; }
.expander { display: block; width: 4px; margin-left: 6px; border: 4px solid transparent; border-left-color: #666; border-right: 0; }
.find { display: flex; align-items: center; padding-right: 3px; }
.find input { flex: 1; min-width: 0; }
.find input::placeholder { color: #858585; opacity: 1; }

/* Intruder review */
.filters { display: flex; flex-direction: column; gap: 4px; padding: 1px 4px 2px 5px; background: var(--face); }
.frow { display: flex; align-items: center; height: 20px; }
.frow label { font: 12px/16px var(--tool); margin: 0 3px 0 8px; white-space: nowrap; }
.frow .grip + label { margin-left: 7px; }
.grip { width: 2px; height: 10px; background: repeating-linear-gradient(#888 0 2px, transparent 2px 4px); }
.frow > input { height: 20px; border: 1px solid var(--edge); background: #fff; }
.w-source { width: 133px; }
.w-message { flex: 1; min-width: 0; }
.w-cat { width: 200px; }
.w-period { width: 250px; }
.w-days { width: 150px; margin-left: 8px; }

.spin { display: flex; align-items: center; width: 100px; height: 20px; border: 1px solid var(--edge); background: #fff; }
.spin input { flex: 1; min-width: 0; text-align: right; }
.arrows { display: grid; gap: 5px; width: 18px; justify-items: center; }
.arrows::before { content: ""; border: 3px solid transparent; border-bottom-color: #666; border-top: 0; }
.arrows::after { content: ""; border: 3px solid transparent; border-top-color: #666; border-bottom: 0; }
.ftools { flex: 1; display: flex; align-items: center; margin-left: 3px; }

.empty { flex: 1; display: grid; place-items: center; color: #a0a0a0; }

.btabs { display: flex; align-items: flex-start; height: 27px; padding-left: 3px; border-top: 1px solid var(--line); background: var(--bar); }

.btab {
  display: flex;
  align-items: center;
  gap: 3px;
  height: 23px;
  padding: 0 6px;
  border: 1px solid var(--line);
  border-top: 0;
  background: var(--face);
}

.btab-on { height: 24px; padding: 0 8px; border-left: 0; }

.statusbar {
  display: flex;
  justify-content: space-between;
  align-items: center;
  height: 25px;
  padding: 3px 4px 0;
  border-top: 1px solid var(--line);
  background: var(--bar);
}
```
